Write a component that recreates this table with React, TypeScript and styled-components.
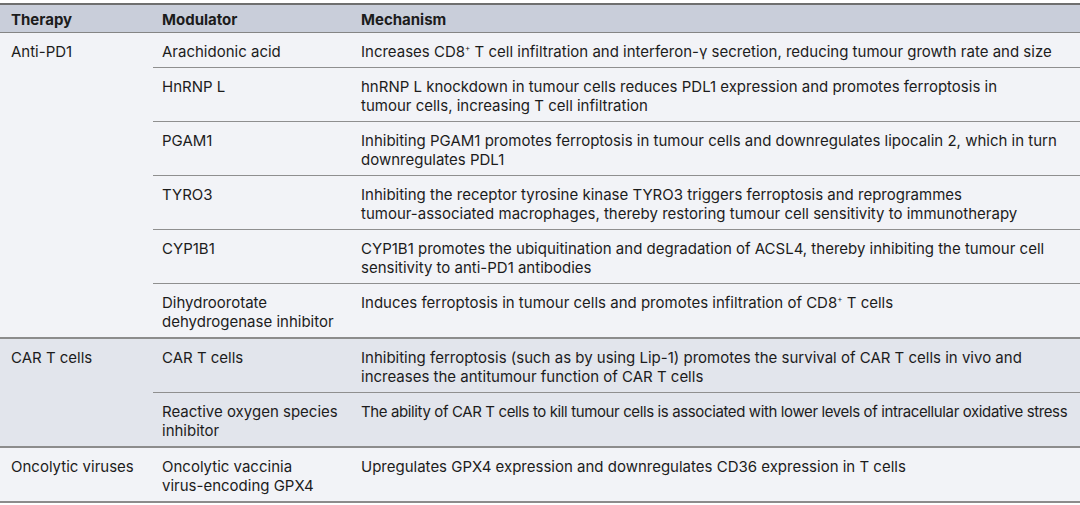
import React from "react";
import styled, { createGlobalStyle } from "styled-components";

const GlobalStyle = createGlobalStyle`
    html, body {
        margin: 0;
        padding: 0;
        background: #ffffff;
    }
    body {
        font-family: Inter, "Noto Sans", "Liberation Sans", sans-serif;
        color: #1c1c1c;
        -webkit-font-smoothing: antialiased;
    }
`;

// Whole table, full width of the page
const TableWrap = styled.div`
    width: 1080px;
    padding-top: 3px;
    font-size: 15px;
    line-height: 19px;
`;

const Columns = styled.div`
    display: grid;
    grid-template-columns: 153px 199px 1fr;
`;

const HeaderRow = styled(Columns)`
    background: #c9ceda;
    border-top: 2px solid #6f6f6f;
    border-bottom: 1px solid #858585;
    height: 27px;
    align-items: center;
`;

const HeadCell = styled.div<{ $first?: boolean }>`
    font-weight: 700;
    padding-left: ${(p) => (p.$first ? "11px" : "9px")};
    padding-top: 1px;
`;

const Group = styled.div<{ $shade: "light" | "dark" }>`
    display: grid;
    grid-template-columns: 153px 1fr;
    background: ${(p) => (p.$shade === "dark" ? "#e2e5ec" : "#f2f3f7")};
    border-bottom: 2px solid #8c8c8c;
`;

const TherapyCell = styled.div`
    padding: 9px 8px 6px 11px;
`;

const Rows = styled.div`
    display: flex;
    flex-direction: column;
`;

const Row = styled.div`
    display: grid;
    grid-template-columns: 199px 1fr;
    padding: 9px 0 6px;

    & + & {
        border-top: 1px solid #8f8f8f;
    }
`;

const Cell = styled.div`
    padding-left: 9px;
    padding-right: 4px;
`;

// one typeset line of a cell, broken as in the printed table
const Line = styled.span<{ $tight?: boolean }>`
    display: block;
    white-space: nowrap;
    letter-spacing: ${(p) => (p.$tight ? "-0.38px" : "normal")};
`;

const Sup = styled.sup`
    font-size: 8px;
    line-height: 0;
    vertical-align: 6px;
`;

type Text = React.ReactNode[];
type Entry = { modulator: Text; mechanism: Text; tight?: boolean };
type TherapyGroup = { therapy: string; shade: "light" | "dark"; entries: Entry[] };

const data: TherapyGroup[] = [
    {
        therapy: "Anti-PD1",
        shade: "light",
        entries: [
            {
                modulator: ["Arachidonic acid"],
                mechanism: [
                    <>
                        Increases CD8<Sup>+</Sup> T cell infiltration and interferon-γ secretion,
                        reducing tumour growth rate and size
                    </>,
                ],
            },
            {
                modulator: ["HnRNP L"],
                mechanism: [
                    "hnRNP L knockdown in tumour cells reduces PDL1 expression and promotes ferroptosis in",
                    "tumour cells, increasing T cell infiltration",
                ],
            },
            {
                modulator: ["PGAM1"],
                mechanism: [
                    "Inhibiting PGAM1 promotes ferroptosis in tumour cells and downregulates lipocalin 2, which in turn",
                    "downregulates PDL1",
                ],
            },
            {
                modulator: ["TYRO3"],
                mechanism: [
                    "Inhibiting the receptor tyrosine kinase TYRO3 triggers ferroptosis and reprogrammes",
                    "tumour-associated macrophages, thereby restoring tumour cell sensitivity to immunotherapy",
                ],
            },
            {
                modulator: ["CYP1B1"],
                mechanism: [
                    "CYP1B1 promotes the ubiquitination and degradation of ACSL4, thereby inhibiting the tumour cell",
                    "sensitivity to anti-PD1 antibodies",
                ],
            },
            {
                modulator: ["Dihydroorotate", "dehydrogenase inhibitor"],
                mechanism: [
                    <>
                        Induces ferroptosis in tumour cells and promotes infiltration of CD8
                        <Sup>+</Sup> T cells
                    </>,
                ],
            },
        ],
    },
    {
        therapy: "CAR T cells",
        shade: "dark",
        entries: [
            {
                modulator: ["CAR T cells"],
                mechanism: [
                    "Inhibiting ferroptosis (such as by using Lip-1) promotes the survival of CAR T cells in vivo and",
                    "increases the antitumour function of CAR T cells",
                ],
            },
            {
                modulator: ["Reactive oxygen species", "inhibitor"],
                mechanism: [
                    "The ability of CAR T cells to kill tumour cells is associated with lower levels of intracellular oxidative stress",
                ],
                tight: true,
            },
        ],
    },
    {
        therapy: "Oncolytic viruses",
        shade: "light",
        entries: [
            {
                modulator: ["Oncolytic vaccinia", "virus-encoding GPX4"],
                mechanism: [
                    "Upregulates GPX4 expression and downregulates CD36 expression in T cells",
                ],
            },
        ],
    },
];

const App: React.FC = () => {
    return (
        <>
            <GlobalStyle />
            <TableWrap>
                <HeaderRow>
                    <HeadCell $first>Therapy</HeadCell>
                    <HeadCell>Modulator</HeadCell>
                    <HeadCell>Mechanism</HeadCell>
                </HeaderRow>

                {data.map((group) => (
                    <Group key={group.therapy} $shade={group.shade}>
                        <TherapyCell>{group.therapy}</TherapyCell>
                        <Rows>
                            {group.entries.map((entry, i) => (
                                <Row key={i}>
                                    <Cell>
                                        {entry.modulator.map((line, j) => (
                                            <Line key={j}>{line}</Line>
                                        ))}
                                    </Cell>
                                    <Cell>
                                        {entry.mechanism.map((line, j) => (
                                            <Line key={j} $tight={entry.tight}>
                                                {line}
                                            </Line>
                                        ))}
                                    </Cell>
                                </Row>
                            ))}
                        </Rows>
                    </Group>
                ))}
            </TableWrap>
        </>
    );
};

export default App;
